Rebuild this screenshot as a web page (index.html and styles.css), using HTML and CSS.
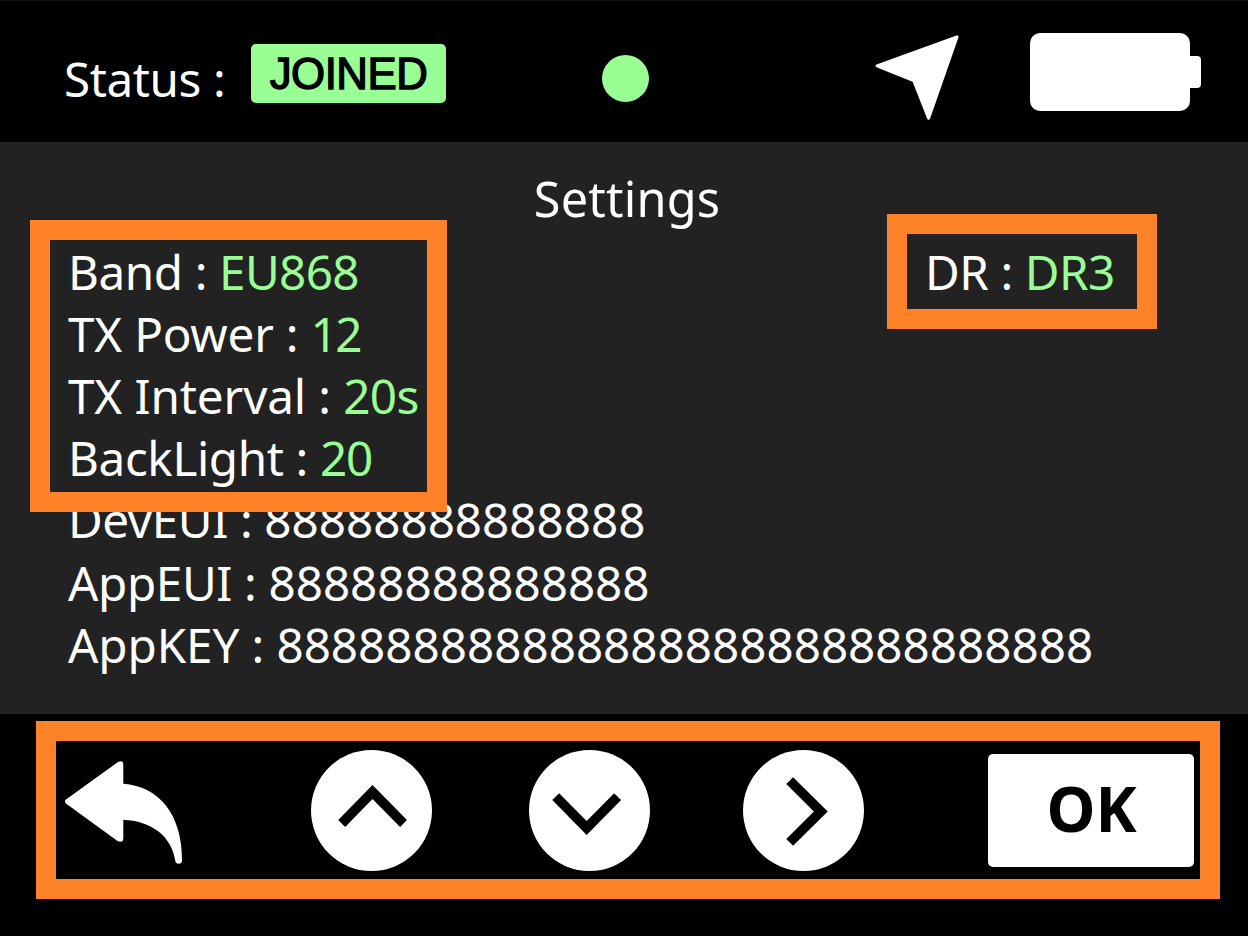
FILE: index.html
```html
<!DOCTYPE html>
<html lang="en">
<head>
<meta charset="utf-8">
<title>Settings</title>
<link rel="stylesheet" href="styles.css">
</head>
<body>
<div class="screen">
  <header class="topbar">
    <span class="status-label">Status :</span>
    <span class="status-badge">JOINED</span>
    <span class="dot"></span>
    <svg class="gps" width="86" height="88" viewBox="874 34 86 88">
      <path d="M957 37L877 65.800L913.700 80.500L928.600 118.300Z" fill="#fff" stroke="#fff" stroke-width="3" stroke-linejoin="round"/>
    </svg>
    <div class="battery"><span class="cell"></span><span class="cap"></span></div>
  </header>

  <main class="panel">
    <h1 class="title">Settings</h1>
    <div class="columns">
      <ul class="list">
        <li class="band">Band : <b>EU868</b></li>
        <li class="power">TX Power : <b>12</b></li>
        <li class="interval">TX Interval : <b>20s</b></li>
        <li class="light">BackLight : <b>20</b></li>
        <li class="eui">DevEUI : <span>88888888888888</span></li>
        <li class="eui">AppEUI : <span>88888888888888</span></li>
        <li class="key">AppKEY : <span>888888888888888888888888888888</span></li>
      </ul>
      <div class="rate">DR : <b>DR3</b></div>
    </div>
    <div class="mark mark-list"></div>
    <div class="mark mark-rate"></div>
  </main>

  <footer class="controls">
    <svg class="back" width="120" height="106" viewBox="64 760 120 106">
      <path d="M65.600 799.800L118 762Q123.300 759.500 123.300 764.500V783.700C159 786.500 182.200 814 182 860.500Q182 863.800 178.500 863.800Q175.800 863.800 175.200 860.500C171.500 836 151 821 123.300 819.800V838.500Q123 843.500 117.500 841L65.600 803.200Q64.400 801.500 65.600 799.800Z" fill="#fff"/>
    </svg>
    <svg class="round up" width="121" height="121" viewBox="311 750 121 121">
      <circle cx="371.500" cy="810.500" r="60.500" fill="#fff"/>
      <path d="M341.700 823.500L372.500 792L403.500 823.500" fill="none" stroke="#000" stroke-width="9.700"/>
    </svg>
    <svg class="round down" width="121" height="121" viewBox="529 750 121 121">
      <circle cx="589.500" cy="810.500" r="60.500" fill="#fff"/>
      <path d="M555.700 796.700L586.700 828L617.600 796.700" fill="none" stroke="#000" stroke-width="9.700"/>
    </svg>
    <svg class="round next" width="121" height="121" viewBox="743 750 121 121">
      <circle cx="803.500" cy="810.500" r="60.500" fill="#fff"/>
      <path d="M789.700 780.600L820.800 811.500L789.700 842.400" fill="none" stroke="#000" stroke-width="9.700"/>
    </svg>
    <button class="ok">OK</button>
  </footer>
</div>
</body>
</html>
```
FILE: styles.css
```css
* { box-sizing: border-box; }
body { margin: 0; background: #000; }
svg { display: block; flex: none; }

.screen {
  width: 1248px;
  height: 936px;
  overflow: hidden;
  display: flex;
  flex-direction: column;
  background: #000;
  color: #fff;
  font: 47.600px/62.200px "Noto Sans", "Open Sans", sans-serif;
}

.topbar {
  height: 142px;
  flex: none;
  display: flex;
  align-items: flex-start;
  border-top: 1px solid #121212;
}
.status-label {
  width: 187px;
  margin: 47px 0 0 64px;
  flex: none;
  white-space: nowrap;
  letter-spacing: -0.400px;
}
.status-badge {
  width: 195px;
  height: 59px;
  margin-top: 43px;
  border-radius: 5px;
  background: #99ff94;
  color: #000;
  text-align: center;
  font: 43.800px/60px "Liberation Sans", Arial, sans-serif;
  letter-spacing: -0.500px;
  -webkit-text-stroke: 1.400px #000;
}
.dot {
  width: 47px;
  height: 47px;
  margin: 54px 0 0 156px;
  border-radius: 50%;
  background: #99ff94;
}
.gps { margin: 33px 0 0 225px; }
.battery {
  display: flex;
  align-items: center;
  margin: 32px 0 0 70px;
}
.cell {
  width: 160px;
  height: 78px;
  border-radius: 10px;
  background: #fff;
}
.cap {
  width: 10.700px;
  height: 32px;
  border-radius: 0 4px 4px 0;
  background: #fff;
}

.panel {
  position: relative;
  height: 572px;
  flex: none;
  background: #222;
}
.title {
  margin: 0;
  padding: 25px 0 0 6px;
  height: 98.600px;
  text-align: center;
  font-size: 48.600px;
  font-weight: 400;
  letter-spacing: 0.200px;
}
.columns { display: flex; }
.list {
  width: 854px;
  margin: 0;
  padding: 0 0 0 68px;
  list-style: none;
  white-space: nowrap;
}
.list li { height: 62.200px; }
.band { letter-spacing: -0.400px; }
.power { letter-spacing: -0.200px; }
.interval { letter-spacing: -0.100px; }
.light { letter-spacing: -0.380px; }
.eui { letter-spacing: -0.380px; }
.key { letter-spacing: -0.100px; }
.list span { letter-spacing: 0; }
.rate { padding-left: 71px; white-space: nowrap; letter-spacing: -0.400px; }
b { font-weight: 400; color: #99ff94; letter-spacing: -0.600px; }
.power b { letter-spacing: -2.500px; }
.light b { letter-spacing: -1.200px; }

.mark { position: absolute; border: 20px solid #ff8228; }
.mark-list { left: 30px; top: 78px; width: 417px; height: 292px; }
.mark-rate { left: 887px; top: 72px; width: 270px; height: 115px; }

.controls {
  width: 1184px;
  height: 178px;
  margin: 7px 0 0 36px;
  flex: none;
  display: flex;
  align-items: flex-start;
  border: 20px solid #ff8228;
}
.back { margin: 19px 0 0 8px; }
.round { margin-top: 9px; }
.up { margin-left: 127px; }
.down { margin-left: 97px; }
.next { margin-left: 93px; }
.ok {
  width: 206px;
  height: 113px;
  margin: 13px 0 0 124px;
  padding: 0 0 5px 1px;
  border: 0;
  border-radius: 5px;
  background: #fff;
  color: #000;
  font: 700 62px/1 "Noto Sans", "Open Sans", sans-serif;
}
```
